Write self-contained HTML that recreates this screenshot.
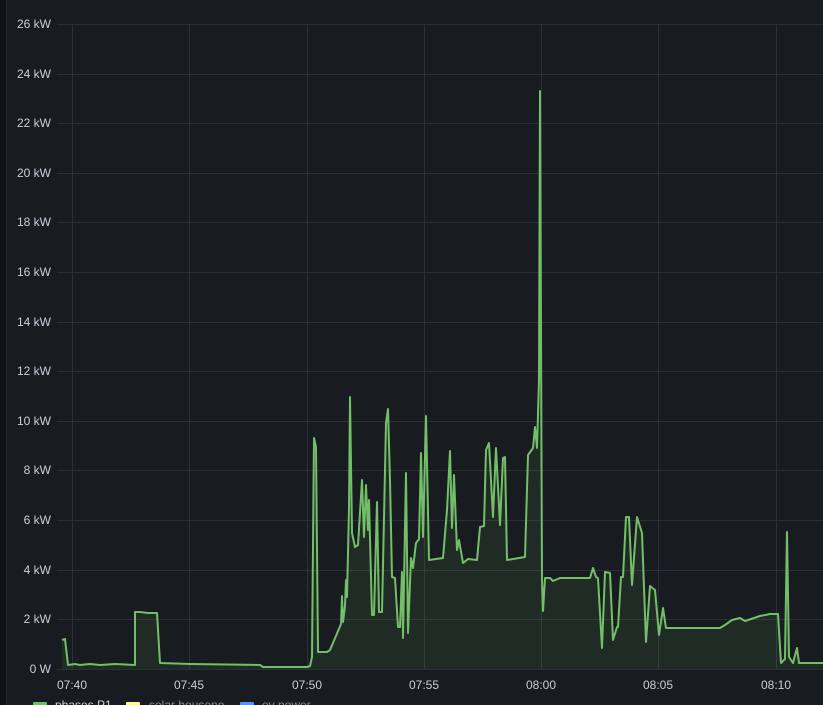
<!DOCTYPE html><html><head><style>
html,body{margin:0;padding:0;background:#181b1f;width:823px;height:705px;overflow:hidden;font-family:"Liberation Sans",sans-serif}
</style></head><body>
<svg width="823" height="705" xmlns="http://www.w3.org/2000/svg" style="position:absolute;left:0;top:0">
<rect x="0" y="0" width="6" height="705" fill="#111217"/>
<rect x="6" y="0" width="1" height="705" fill="#22252b"/>
<g stroke="#2c2f35" stroke-width="1">
<line x1="57" x2="823" y1="24.5" y2="24.5"/><line x1="57" x2="823" y1="74.5" y2="74.5"/><line x1="57" x2="823" y1="123.5" y2="123.5"/><line x1="57" x2="823" y1="173.5" y2="173.5"/><line x1="57" x2="823" y1="222.5" y2="222.5"/><line x1="57" x2="823" y1="272.5" y2="272.5"/><line x1="57" x2="823" y1="322.5" y2="322.5"/><line x1="57" x2="823" y1="371.5" y2="371.5"/><line x1="57" x2="823" y1="421.5" y2="421.5"/><line x1="57" x2="823" y1="470.5" y2="470.5"/><line x1="57" x2="823" y1="520.5" y2="520.5"/><line x1="57" x2="823" y1="570.5" y2="570.5"/><line x1="57" x2="823" y1="619.5" y2="619.5"/><line x1="57" x2="823" y1="669.5" y2="669.5"/>
<line y1="24" y2="669" x1="72.5" x2="72.5"/><line y1="24" y2="669" x1="189.5" x2="189.5"/><line y1="24" y2="669" x1="307.5" x2="307.5"/><line y1="24" y2="669" x1="424.5" x2="424.5"/><line y1="24" y2="669" x1="541.5" x2="541.5"/><line y1="24" y2="669" x1="658.5" x2="658.5"/><line y1="24" y2="669" x1="776.5" x2="776.5"/>
</g>
<g fill="#ccccdc" font-size="12" text-anchor="end">
<text x="51" y="28">26 kW</text><text x="51" y="78">24 kW</text><text x="51" y="127">22 kW</text><text x="51" y="177">20 kW</text><text x="51" y="226">18 kW</text><text x="51" y="276">16 kW</text><text x="51" y="326">14 kW</text><text x="51" y="375">12 kW</text><text x="51" y="425">10 kW</text><text x="51" y="474">8 kW</text><text x="51" y="524">6 kW</text><text x="51" y="574">4 kW</text><text x="51" y="623">2 kW</text><text x="51" y="673">0 W</text>
</g>
<g fill="#ccccdc" font-size="12" text-anchor="middle">
<text x="72" y="689">07:40</text><text x="189" y="689">07:45</text><text x="307" y="689">07:50</text><text x="424" y="689">07:55</text><text x="541" y="689">08:00</text><text x="658" y="689">08:05</text><text x="776" y="689">08:10</text>
</g>
<g id="d">
<polygon fill="rgba(115,191,105,0.1)" points="62,669 62,640 65,639 68,665 75,664 80,665 90,664 100,665 115,664 135,665 135,612 140,612 148,613 157,613 160,663 190,664 260,665 263,667 307,667 310,666 312,657 314,438 316,447 318,652 327,652 330,650 341,624 342,596 343,622 345,606 346,580 347,597 349,508 350,397 352,533 355,547 358,545 362,480 364,537 366,485 368,530 369,500 372,615 374,615 377,502 379,612 382,612 386,423 388,409 390,480 392,577 395,578 398,627 400,627 402,572 403,638 406,473 408,633 411,558 413,568 416,543 419,539 421,453 423,537 426,416 429,560 443,558 447,510 450,451 452,528 454,475 457,550 459,540 463,563 468,559 477,560 480,527 484,526 486,450 489,443 493,517 496,448 500,525 503,458 505,457 507,560 525,557 528,455 533,448 535,427 537,448 539,380 540,91 542,580 543,611 545,578 550,578 553,581 560,578 590,578 593,568 596,577 598,578 602,648 605,572 610,573 613,640 617,627 618,627 621,577 623,577 626,517 629,517 632,585 637,517 642,533 646,642 650,586 655,590 659,635 663,608 666,628 720,628 725,625 732,620 740,618 745,621 760,616 770,614 778,614 781,663 785,659 787,532 789,657 793,663 797,648 799,663 823,663 823,669"/>
<polyline fill="none" stroke="#73bf69" stroke-width="2" stroke-linejoin="round" points="62,640 65,639 68,665 75,664 80,665 90,664 100,665 115,664 135,665 135,612 140,612 148,613 157,613 160,663 190,664 260,665 263,667 307,667 310,666 312,657 314,438 316,447 318,652 327,652 330,650 341,624 342,596 343,622 345,606 346,580 347,597 349,508 350,397 352,533 355,547 358,545 362,480 364,537 366,485 368,530 369,500 372,615 374,615 377,502 379,612 382,612 386,423 388,409 390,480 392,577 395,578 398,627 400,627 402,572 403,638 406,473 408,633 411,558 413,568 416,543 419,539 421,453 423,537 426,416 429,560 443,558 447,510 450,451 452,528 454,475 457,550 459,540 463,563 468,559 477,560 480,527 484,526 486,450 489,443 493,517 496,448 500,525 503,458 505,457 507,560 525,557 528,455 533,448 535,427 537,448 539,380 540,91 542,580 543,611 545,578 550,578 553,581 560,578 590,578 593,568 596,577 598,578 602,648 605,572 610,573 613,640 617,627 618,627 621,577 623,577 626,517 629,517 632,585 637,517 642,533 646,642 650,586 655,590 659,635 663,608 666,628 720,628 725,625 732,620 740,618 745,621 760,616 770,614 778,614 781,663 785,659 787,532 789,657 793,663 797,648 799,663 823,663"/>
</g>
<rect x="33" y="702" width="14" height="5" rx="1" fill="#73bf69"/>
<text x="55" y="709" fill="#ccccdc" font-size="12">phases P1</text>
<rect x="126" y="702" width="14" height="5" rx="1" fill="#fff899"/>
<text x="149" y="709" fill="#8e8e8e" font-size="12">solar houseno</text>
<rect x="240" y="702" width="14" height="5" rx="1" fill="#5794f2"/>
<text x="262" y="709" fill="#8e8e8e" font-size="12">ev power</text>
</svg>
</body></html>
